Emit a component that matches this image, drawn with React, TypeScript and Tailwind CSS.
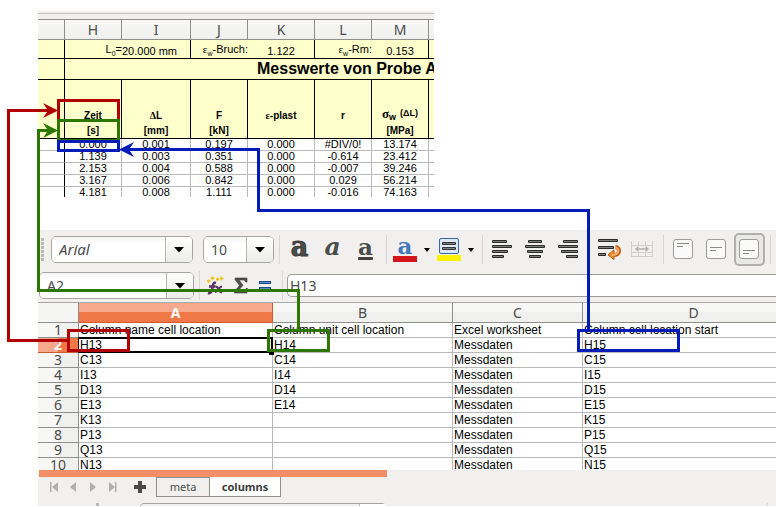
import React from "react";

const UI = "font-['Noto_Sans','Open_Sans',sans-serif]";
const DATA = "font-['Liberation_Sans',Arial,sans-serif]";

const measureRows = [
  ["0.000", "0.001", "0.197", "0.000", "#DIV/0!", "13.174"],
  ["1.139", "0.003", "0.351", "0.000", "-0.614", "23.412"],
  ["2.153", "0.004", "0.588", "0.000", "-0.007", "39.246"],
  ["3.167", "0.006", "0.842", "0.000", "0.029", "56.214"],
  ["4.181", "0.008", "1.111", "0.000", "-0.016", "74.163"],
];

const configRows = [
  ["Column name cell location", "Column unit cell location", "Excel worksheet", "Column cell location start"],
  ["H13", "H14", "Messdaten", "H15"],
  ["C13", "C14", "Messdaten", "C15"],
  ["I13", "I14", "Messdaten", "I15"],
  ["D13", "D14", "Messdaten", "D15"],
  ["E13", "E14", "Messdaten", "E15"],
  ["K13", "", "Messdaten", "K15"],
  ["P13", "", "Messdaten", "P15"],
  ["Q13", "", "Messdaten", "Q15"],
  ["N13", "", "Messdaten", "N15"],
];

function Subscripted({ base, sub, rest }: { base: React.ReactNode; sub: string; rest: string }) {
  return (
    <div className="flex h-[18px] items-center justify-end leading-[13px]">
      {base}
      <span className="mt-2 text-[7px] leading-none">{sub}</span>
      {rest}
    </div>
  );
}

function Greek({ children }: { children: string }) {
  return <span className="font-['Liberation_Serif',serif] leading-none">{children}</span>;
}

function HeadCell({ name, unit }: { name: React.ReactNode; unit?: string }) {
  return (
    <th className="h-[59px] border-r border-b border-black p-0 align-bottom text-[10px] font-bold">
      <div className="h-[15px] leading-[15px] whitespace-nowrap">{name}</div>
      <div className="h-[15px] leading-[15px]">{unit}</div>
    </th>
  );
}

function MeasureSheet() {
  return (
    <section className="ml-[38px] h-[186px] w-[396px] overflow-hidden bg-white" aria-label="Measured values">
      <div className="h-[9px] border-b border-[#8f8f8c] bg-[#f1f0ee] pt-[2px]">
        <div className="h-px bg-[#c2c2c0]" />
      </div>
      <table className={`w-full table-fixed border-separate border-spacing-0 text-center text-[11px] text-black ${DATA}`}>
        <colgroup>
          <col className="w-[27px]" />
          <col className="w-[57px]" />
          <col className="w-[69px]" />
          <col className="w-[57px]" />
          <col className="w-[67px]" />
          <col className="w-[57px]" />
          <col className="w-[57px]" />
          <col />
        </colgroup>
        <thead>
          <tr className={`bg-linear-to-b from-[#f7f7f5] to-[#efefed] text-sm text-[#4c4c4c] ${UI}`}>
            {["", "H", "I", "J", "K", "L", "M", ""].map((c, i) => (
              <th key={i} className="h-5 border-r border-b border-[#8f8f8c] p-0 leading-[19px] font-normal last:border-r-0">
                {c}
              </th>
            ))}
          </tr>
        </thead>
        <tbody>
          <tr className="bg-[#ffffcc] whitespace-nowrap">
            <td className="h-[19px] border-r border-b border-black p-0" />
            <td className="border-b border-black p-0">
              <Subscripted base="L" sub="0" rest="=" />
            </td>
            <td className="border-r border-b border-black p-0 pt-[5px] text-left leading-[13px]">20.000 mm</td>
            <td className="border-b border-black p-0">
              <Subscripted base={<Greek>ε</Greek>} sub="w" rest="-Bruch:" />
            </td>
            <td className="border-r border-b border-black p-0 pt-[5px] leading-[13px]">1.122</td>
            <td className="border-b border-black p-0">
              <Subscripted base={<Greek>ε</Greek>} sub="w" rest="-Rm:" />
            </td>
            <td className="border-r border-b border-black p-0 pt-[5px] leading-[13px]">0.153</td>
            <td className="border-b border-black p-0" />
          </tr>
          <tr className="bg-[#ffffcc]">
            <td className="h-[21px] border-r border-b border-black p-0" />
            <td colSpan={7} className="overflow-hidden border-b border-black p-0 pl-48 text-left text-base leading-5 font-bold whitespace-nowrap">
              Messwerte von Probe A
            </td>
          </tr>
          <tr className="bg-[#ffffcc]">
            <td className="border-r border-b border-black p-0" />
            <HeadCell name="Zeit" unit="[s]" />
            <HeadCell name={<><Greek>Δ</Greek>L</>} unit="[mm]" />
            <HeadCell name="F" unit="[kN]" />
            <HeadCell name={<><Greek>ε</Greek>-plast</>} />
            <HeadCell name="r" />
            <HeadCell
              name={
                <span className="flex h-[10px] items-center justify-center">
                  <span className="font-['Liberation_Serif',serif] text-[13px] leading-none">σ</span>
                  <span className="mt-2 text-[9px] leading-none">w</span>
                  <span className="ml-1 text-[9px] leading-none">(ΔL)</span>
                </span>
              }
              unit="[MPa]"
            />
            <td className="border-b border-black p-0" />
          </tr>
          {measureRows.map((row) => (
            <tr key={row[0]}>
              <td className="h-3 border-r border-b border-r-black border-b-[#b9b9b9] p-0" />
              {row.map((v, i) => (
                <td key={i} className="h-3 border-r border-b border-[#b9b9b9] p-0 leading-[11px]">
                  {v}
                </td>
              ))}
              <td className="border-b border-[#b9b9b9] p-0" />
            </tr>
          ))}
        </tbody>
      </table>
    </section>
  );
}

function Caret({ small }: { small?: boolean }) {
  return small ? (
    <svg width="6" height="4" viewBox="0 0 6 4" aria-hidden="true"><path d="M0 0H6L3 4Z" /></svg>
  ) : (
    <svg width="10" height="6" viewBox="0 0 10 6" aria-hidden="true"><path d="M0 0H10L5 5.5Z" /></svg>
  );
}

function Combo({ label, value, className }: { label: string; value: string; className: string }) {
  return (
    <label className={`relative flex h-[27px] shrink-0 overflow-hidden rounded-[5px] border border-[#a5a5a2] bg-white text-[#4c4c4c] ${className}`}>
      <select aria-label={label} className="min-w-0 flex-1 appearance-none bg-linear-to-b from-[#f5f5f5] to-white to-30% pl-[7px] leading-[25px] outline-none">
        <option>{value}</option>
      </select>
      <span className="pointer-events-none absolute inset-y-0 right-0 flex w-[27px] items-center justify-center border-l border-[#b4b4b1] bg-linear-to-b from-white to-[#ececea] text-black">
        <Caret />
      </span>
    </label>
  );
}

function Separator({ className }: { className: string }) {
  return <span className={`h-[29px] w-px shrink-0 bg-[#d9d8d6] ${className}`} />;
}

function Tool({ label, children, className = "w-[33px]" }: { label: string; children: React.ReactNode; className?: string }) {
  return (
    <button type="button" aria-label={label} className={`flex h-[33px] shrink-0 items-center justify-center ${className}`}>
      {children}
    </button>
  );
}

function Lines({ rows }: { rows: number[][] }) {
  return (
    <svg width="21" height="19" viewBox="0 0 21 19" aria-hidden="true">
      {rows.map(([x, w], i) => (
        <g key={i}>
          <rect x={x} y={i * 5} width={w} height="3" rx="1" fill="#2a2c29" />
          <rect x={x + 1} y={1 + i * 5} width={w - 2} height="1" fill="#7b7e79" />
        </g>
      ))}
    </svg>
  );
}

function VerticalAlign({ y }: { y: number }) {
  return (
    <svg width="21" height="21" viewBox="0 0 21 21" aria-hidden="true">
      <rect x="0.5" y="0.5" width="19" height="19" rx="2.5" fill="#fafafa" stroke="#9b9b99" />
      <path d={`M4 ${y}.5H16M4 ${y + 3}.5H10`} stroke="#8a8a88" />
    </svg>
  );
}

const letter = "font-['DejaVu_Serif',serif] font-bold text-[#4a4d4a]";

function FormatToolbar() {
  return (
    <div className="flex h-[39px] items-center pl-[3px]">
      <span className="h-6 w-[3px] shrink-0 bg-[repeating-linear-gradient(to_bottom,#b9b9b7_0_3px,transparent_3px_4px)]" />
      <Combo label="Font name" value="Arial" className="ml-[7px] w-[142px] text-[15px] italic" />
      <Combo label="Font size" value="10" className="ml-[10px] w-[71px] text-sm" />
      <Separator className="ml-[5px]" />
      <Tool label="Bold" className="ml-[3px] w-[33px]">
        <span className={`-mt-[6px] text-[27px] leading-[20px] [-webkit-text-stroke:1px_#3a3d3a] ${letter}`}>a</span>
      </Tool>
      <Tool label="Italic">
        <span className={`-mt-[6px] text-[25px] leading-[20px] italic ${letter}`}>a</span>
      </Tool>
      <Tool label="Underline">
        <span className="flex flex-col items-center">
          <span className={`text-[23px] leading-[16px] ${letter}`}>a</span>
          <span className="mt-[2px] h-[3px] w-[15px] rounded-[1px] bg-[#3f423f]" />
        </span>
      </Tool>
      <Separator className="ml-1" />
      <Tool label="Font color" className="ml-[6px] w-6">
        <span className="flex flex-col items-center">
          <span className="font-['DejaVu_Serif',serif] text-[23px] leading-[16px] font-bold text-[#4479bd]">a</span>
          <span className="mt-[2px] h-[6px] w-6 bg-[#d4161c]" />
        </span>
      </Tool>
      <Tool label="Font color options" className="w-5"><Caret small /></Tool>
      <Tool label="Highlighting" className="w-6">
        <svg width="24" height="25" viewBox="0 0 24 25" aria-hidden="true">
          <rect x="2.5" y="1.5" width="19" height="15" rx="1.5" fill="#dce8f5" stroke="#3566a6" />
          <rect x="5" y="5" width="14" height="3" rx="1" fill="#333633" />
          <rect x="5" y="10" width="14" height="3" rx="1" fill="#333633" />
          <path d="M6 6.500H18M6 11.500H18" stroke="#7b7e79" />
          <rect y="18" width="24" height="6" fill="#fff200" />
        </svg>
      </Tool>
      <Tool label="Highlighting options" className="w-5"><Caret small /></Tool>
      <Separator className="ml-px" />
      <Tool label="Align left" className="ml-[3px] w-[33px]"><Lines rows={[[0, 15], [0, 20], [0, 16], [0, 12]]} /></Tool>
      <Tool label="Center"><Lines rows={[[3, 14], [0, 20], [2, 16], [4, 12]]} /></Tool>
      <Tool label="Align right"><Lines rows={[[5, 15], [0, 20], [3, 17], [8, 12]]} /></Tool>
      <Tool label="Wrap text" className="ml-2 w-[33px]">
        <svg width="23" height="21" viewBox="0 0 23 21" aria-hidden="true">
          <rect y="0" width="20" height="3" rx="1" fill="#2a2c29" />
          <rect y="7" width="16" height="3" rx="1" fill="#2a2c29" />
          <rect y="14" width="8" height="3" rx="1" fill="#2a2c29" />
          <path d="M1 1.5H19M1 8.5H15M1 15.5H7" stroke="#7b7e79" />
          <path d="M17.500 8C22.500 8.500 22.500 16 15.500 16" fill="none" stroke="#c4590b" strokeWidth="4" />
          <path d="M10 16L16 10.800V20.600Z" fill="#f08a2c" stroke="#c4590b" />
          <path d="M18 8.500C21.800 9.500 21.500 16 14 16" fill="none" stroke="#f9b46d" strokeWidth="1.8" />
        </svg>
      </Tool>
      <Tool label="Merge cells">
        <svg width="23" height="17" viewBox="0 0 23 17" fill="none" stroke="#cfcfcd" aria-hidden="true">
          <path d="M.5 0V16M21.5 0V16M7.5 0V4M14.5 0V4M7.5 11V16M14.5 11V16M0 4.5H22M0 11.5H22M0 15.5H22" />
          <path d="M5 8H17M7.5 5.8L5 8L7.5 10.2M14.5 5.8L17 8L14.5 10.2" stroke="#b0b0ae" strokeWidth="1.4" />
        </svg>
      </Tool>
      <Separator className="ml-1" />
      <Tool label="Align top" className="ml-[3px] w-[33px]"><VerticalAlign y={4} /></Tool>
      <Tool label="Center vertically"><VerticalAlign y={8} /></Tool>
      <Tool label="Align bottom" className="ml-px w-[31px] rounded-[5px] border-2 border-[#b0b0ae] bg-[#e8e8e6]"><VerticalAlign y={11} /></Tool>
      <Separator className="ml-[5px]" />
    </div>
  );
}

function FormulaBar() {
  return (
    <div className="flex h-[33px] items-center pl-px">
      <Combo label="Name box" value="A2" className="w-[155px] text-sm" />
      <Separator className="ml-[5px]" />
      <Tool label="Function wizard" className="ml-[3px] w-6">
        <svg width="18" height="20" viewBox="0 0 18 20" aria-hidden="true">
          <path d="M10 7C7 6 7 9 6.500 12S5 18 2 17M3 10.500H9.500" fill="none" stroke="#5c3566" strokeWidth="2.4" />
          <path d="M9.500 11C13 9.500 12 17.500 16 16M16 10.500C13 10.500 12 16.500 9 16" fill="none" stroke="#5c3566" strokeWidth="2.200" />
          <path d="M2.500 3.500V7M1 5H4.500M6.500 .5V4M4.500 2.200H8.500M11.500 1.500V5M10 3.200H13M15.500 .5V4.500M13.500 2.500H17.500" stroke="#edc21c" strokeWidth="1.400" />
        </svg>
      </Tool>
      <Tool label="Sum" className="ml-[2px] w-6">
        <svg width="14" height="17" viewBox="0 0 14 17" aria-hidden="true">
          <path d="M1 1H13V5H11.500L10.500 3H5L9 8.200L4.500 13.500H11L12 11.500H13.500L13 16H.5V14.500L5.500 8.500L1 2.500Z" fill="#4c4f4c" stroke="#3a3c3a" strokeWidth="0.6" />
        </svg>
      </Tool>
      <Tool label="Formula" className="w-6">
        <svg width="12" height="11" viewBox="0 0 12 11" aria-hidden="true">
          <path d="M0 2.500H12M0 8.500H12" stroke="#204a87" strokeWidth="3" />
          <path d="M1 2.500H11M1 8.500H11" stroke="#5b8bc9" />
        </svg>
      </Tool>
      <Separator className="ml-[5px]" />
      <input
        aria-label="Formula"
        defaultValue="H13"
        className="ml-1 h-[23px] min-w-0 flex-1 rounded-l-[5px] border border-r-0 border-[#9c9c99] bg-white pl-[2px] text-sm text-[#4c4c4c] outline-none"
      />
    </div>
  );
}

function ConfigSheet() {
  return (
    <div className="h-[167px] overflow-hidden">
      <table className={`w-full table-fixed border-separate border-spacing-0 bg-white text-left text-xs text-black ${DATA}`}>
        <colgroup>
          <col className="w-[41px]" />
          <col className="w-[194px]" />
          <col className="w-[180px]" />
          <col className="w-[130px]" />
          <col />
        </colgroup>
        <thead>
          <tr className={`text-center text-sm text-[#4c4c4c] ${UI}`}>
            <th className="h-5 border-r border-b border-[#8f8f8c] bg-[#f5f5f3] p-0" />
            <th className="border-r border-b border-[#cf5b32] bg-linear-to-b from-[#f6a98d] from-45% to-[#f07746] to-45% p-0 leading-[19px] font-bold text-white">A</th>
            {["B", "C"].map((c) => (
              <th key={c} className="border-r border-b border-[#8f8f8c] bg-linear-to-b from-[#f7f7f5] from-45% to-[#f0f0ee] to-45% p-0 leading-[19px] font-normal">{c}</th>
            ))}
            <th className="border-b border-[#8f8f8c] bg-linear-to-b from-[#f7f7f5] from-45% to-[#f0f0ee] to-45% p-0 pl-7 leading-[19px] font-normal">D</th>
          </tr>
        </thead>
        <tbody>
          {configRows.map((row, r) => (
            <tr key={r}>
              <th
                className={
                  r === 1
                    ? `h-[15px] border-r border-b border-[#cf5b32] bg-linear-to-r from-[#f6a98d] from-50% to-[#f07746] to-50% p-0 text-center text-sm leading-[14px] font-bold text-white ${UI}`
                    : `h-[15px] border-r border-b border-[#8f8f8c] bg-linear-to-r from-[#f7f7f5] from-50% to-[#f0f0ee] to-50% p-0 text-center text-sm leading-[14px] font-normal text-[#4c4c4c] ${UI}`
                }
              >
                {r + 1}
              </th>
              {row.map((v, c) => (
                <td key={c} className="relative h-[15px] border-r border-b border-[#b9b9b9] p-0 pl-px leading-[14px] whitespace-nowrap last:border-r-0">
                  {v}
                  {r === 1 && c === 0 && (
                    <span className="absolute -inset-px z-10 border-2 border-l border-black">
                      <span className="absolute -right-[3px] -bottom-[4px] h-[4px] w-[5px] bg-black" />
                    </span>
                  )}
                </td>
              ))}
            </tr>
          ))}
        </tbody>
      </table>
    </div>
  );
}

function NavIcon({ d }: { d: string }) {
  return (
    <svg width="9" height="10" viewBox="0 0 9 10" fill="#b0b0ae" aria-hidden="true"><path d={d} /></svg>
  );
}

function SheetTabs() {
  return (
    <>
      <div className="ml-px h-[7px] w-[348px] bg-[#f28f68]" />
      <div className="flex h-5 items-center pl-3">
        <div className="flex h-5 w-[106px] items-center">
          <Tool label="First sheet" className="w-[19px] justify-start"><NavIcon d="M0 0H1.500V10H0ZM8 0V10L2 5Z" /></Tool>
          <Tool label="Previous sheet" className="w-[20px] justify-start"><NavIcon d="M7 0V10L1 5Z" /></Tool>
          <Tool label="Next sheet" className="w-[19px] justify-start"><NavIcon d="M1 0V10L7 5Z" /></Tool>
          <Tool label="Last sheet" className="w-[25px] justify-start"><NavIcon d="M1 0V10L7 5ZM7 0H8.500V10H7Z" /></Tool>
          <Tool label="Add sheet" className="w-[14px]">
            <svg width="12" height="12" viewBox="0 0 12 12" aria-hidden="true"><path d="M4 0H8V4H12V8H8V12H4V8H0V4H4Z" fill="#4a4a4a" /></svg>
          </Tool>
        </div>
        <button type="button" className="h-5 w-[54px] border border-[#8f8f8c] text-[11px] leading-[18px] text-[#4c4c4c]">meta</button>
        <button type="button" className="h-5 w-[71px] border-r border-b border-[#8f8f8c] bg-white text-[11px] leading-[19px] font-bold text-[#3c3c3c]">columns</button>
      </div>
      <div className="flex h-[9px] items-start overflow-hidden pt-[6px]">
        <span className="ml-[58px] h-[3px] w-[3px] bg-[#b9b9b7]" />
        <span className="ml-[40px] flex h-6 w-[248px] rounded-[5px] border border-[#a5a5a2] bg-[#f1f0ee]">
          <span className="ml-auto w-[27px] border-l border-[#b4b4b1] bg-white" />
        </span>
        <span className="mr-2 ml-auto h-3 w-px bg-[#d9d8d6]" />
      </div>
    </>
  );
}

function Annotations() {
  return (
    <svg className="pointer-events-none absolute top-0 left-0 z-20" width="776" height="507" viewBox="0 0 776 507" fill="none" strokeWidth="3" aria-hidden="true">
      <g stroke="#b00000">
        <rect x="58.500" y="100.500" width="60" height="20" />
        <rect x="68.500" y="330.500" width="60" height="20" />
        <path d="M68 340.500H8.500V110.500H50" />
        <path d="M58 110.500L43 103L48 110.500L43 118Z" fill="#b00000" stroke="none" />
      </g>
      <g stroke="#2d7600">
        <rect x="58.500" y="120.500" width="60" height="20" />
        <rect x="268.500" y="330.500" width="60" height="20" />
        <path d="M298.500 330V290.500H38.500V130.500H50" />
        <path d="M58 130.500L43 123L48 130.500L43 138Z" fill="#2d7600" stroke="none" />
      </g>
      <g stroke="#001cb8">
        <rect x="58.500" y="141.500" width="60" height="9" />
        <rect x="578.500" y="330.500" width="100" height="20" />
        <path d="M588.500 330V210.500H258.500V149.500H128" />
        <path d="M119 149.500L134 142L129 149.500L134 157Z" fill="#001cb8" stroke="none" />
      </g>
    </svg>
  );
}

export default function App() {
  return (
    <main className={`relative overflow-hidden bg-white pt-[11px] pb-px ${UI}`}>
      <MeasureSheet />
      <section className="mt-[33px] ml-[38px] bg-[#f1f0ee]" aria-label="Spreadsheet editor">
        <div className="overflow-hidden border-b border-[#a9a9a7]">
          <FormatToolbar />
          <FormulaBar />
        </div>
        <ConfigSheet />
        <SheetTabs />
      </section>
      <Annotations />
    </main>
  );
}
